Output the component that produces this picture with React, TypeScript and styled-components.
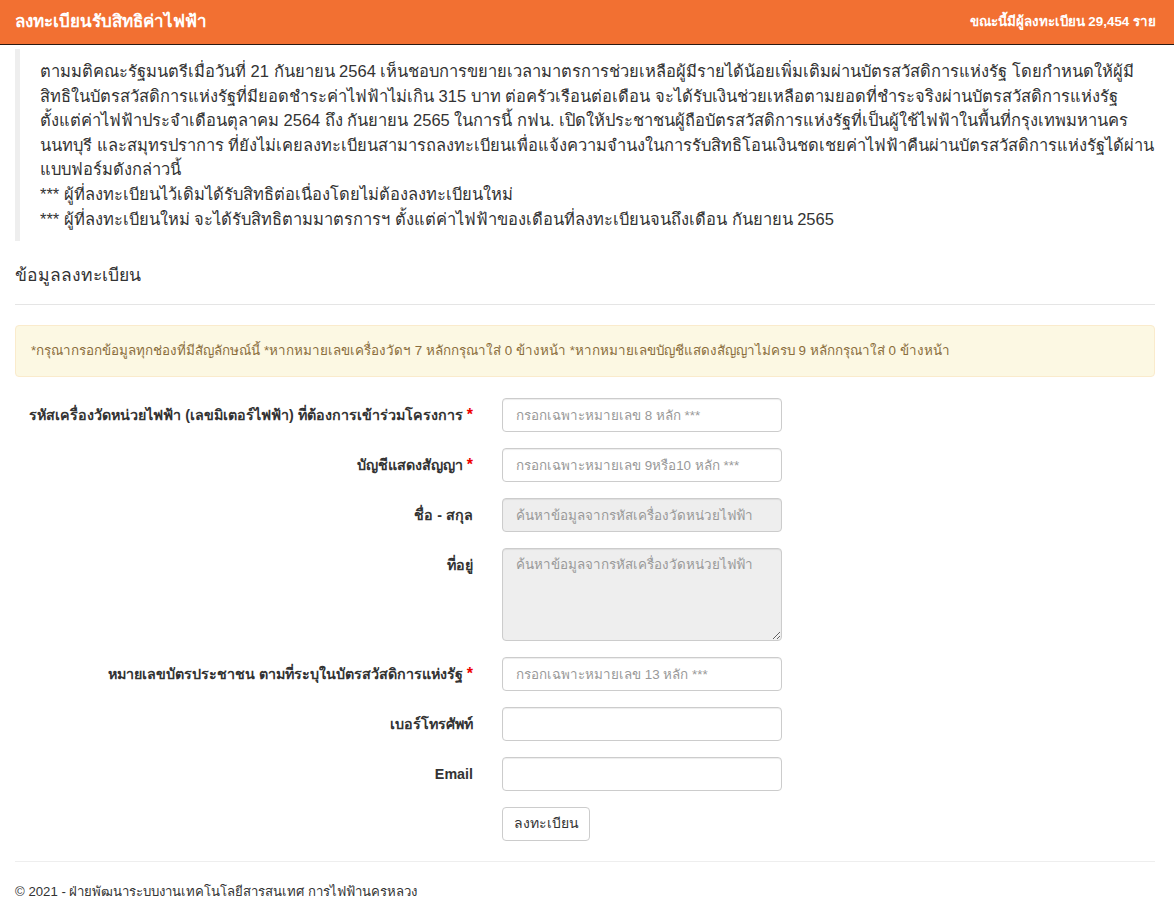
import React from 'react';
import styled, { createGlobalStyle } from 'styled-components';

const GlobalStyle = createGlobalStyle`
    * { box-sizing: border-box; }
    body {
        margin: 0;
        background: #fff;
        color: #333;
        font-family: 'Liberation Sans', Arial, 'Noto Sans', sans-serif;
        font-size: 14px;
        line-height: 1.42857;
    }
`;

// --- navbar ---
const NavBar = styled.header`
    display: flex;
    align-items: center;
    justify-content: space-between;
    height: 45px;
    padding: 0 18px 0 15px;
    background: #f27032;
    border-bottom: 1px solid #2b1a12;
    color: #fff;
`;

const Brand = styled.div`
    font-size: 17px;
    font-weight: bold;
`;

const Counter = styled.div`
    font-size: 13.4px;
    font-weight: bold;
`;

// --- page ---
const Page = styled.main`
    padding: 4px 19px 0 15px;
`;

const Notice = styled.blockquote`
    margin: 0 0 20px;
    padding: 10px 0 10px 20px;
    border-left: 5px solid #eee;
    font-size: 16.5px;
    line-height: 24.6px;
`;

const SectionTitle = styled.h4`
    margin: 24px 0 0;
    padding-bottom: 19px;
    border-bottom: 1px solid #e5e5e5;
    font-size: 17.5px;
    font-weight: normal;
    line-height: 20px;
`;

const Alert = styled.div`
    margin-top: 20px;
    padding: 15px 15px;
    background: #fcf8e3;
    border: 1px solid #faebcc;
    border-radius: 4px;
    color: #8a6d3b;
    font-size: 13.4px;
    line-height: 20px;
`;

// --- form ---
const Form = styled.form`
    display: grid;
    grid-template-columns: 458px 280px;
    column-gap: 29px;
    row-gap: 16px;
    margin-top: 21px;
    align-items: start;
`;

const Label = styled.label`
    padding-top: 7px;
    text-align: right;
    font-size: 14.3px;
    font-weight: bold;
    line-height: 20px;
`;

const Required = styled.span`
    color: #e00;
    margin-left: 4px;
    font-size: 16px;
`;

const Field = styled.input<{ $readOnly?: boolean }>`
    width: 280px;
    height: 34px;
    padding: 6px 13px;
    border: 1px solid #ccc;
    border-radius: 4px;
    background: ${p => (p.$readOnly ? '#eee' : '#fff')};
    box-shadow: inset 0 1px 1px rgba(0, 0, 0, 0.075);
    font: inherit;
    font-size: 13.4px;
    color: #555;
    &::placeholder { color: #999; }
`;

const Area = styled.textarea`
    width: 280px;
    height: 93px;
    padding: 6px 13px;
    border: 1px solid #ccc;
    border-radius: 4px;
    background: #eee;
    box-shadow: inset 0 1px 1px rgba(0, 0, 0, 0.075);
    font: inherit;
    font-size: 13.4px;
    color: #555;
    resize: vertical;
    &::placeholder { color: #999; }
`;

const SubmitButton = styled.button`
    grid-column: 2;
    justify-self: start;
    width: 88px;
    height: 34px;
    padding: 6px 10px;
    border: 1px solid #ccc;
    border-radius: 4px;
    background: #fff;
    color: #333;
    font: inherit;
    font-size: 14px;
    cursor: pointer;
`;

const Footer = styled.footer`
    margin-top: 20px;
    padding-top: 20px;
    border-top: 1px solid #eee;
    font-size: 13.2px;
    line-height: 20px;
`;

type Row = {
    label: string;
    required?: boolean;
    placeholder?: string;
    readOnly?: boolean;
    multiline?: boolean;
};

const rows: Row[] = [
    { label: 'รหัสเครื่องวัดหน่วยไฟฟ้า (เลขมิเตอร์ไฟฟ้า) ที่ต้องการเข้าร่วมโครงการ', required: true, placeholder: 'กรอกเฉพาะหมายเลข 8 หลัก ***' },
    { label: 'บัญชีแสดงสัญญา', required: true, placeholder: 'กรอกเฉพาะหมายเลข 9หรือ10 หลัก ***' },
    { label: 'ชื่อ - สกุล', placeholder: 'ค้นหาข้อมูลจากรหัสเครื่องวัดหน่วยไฟฟ้า', readOnly: true },
    { label: 'ที่อยู่', placeholder: 'ค้นหาข้อมูลจากรหัสเครื่องวัดหน่วยไฟฟ้า', readOnly: true, multiline: true },
    { label: 'หมายเลขบัตรประชาชน ตามที่ระบุในบัตรสวัสดิการแห่งรัฐ', required: true, placeholder: 'กรอกเฉพาะหมายเลข 13 หลัก ***' },
    { label: 'เบอร์โทรศัพท์' },
    { label: 'Email' },
];

export default function App() {
    return (
        <>
            <GlobalStyle />
            <NavBar>
                <Brand>ลงทะเบียนรับสิทธิค่าไฟฟ้า</Brand>
                <Counter>ขณะนี้มีผู้ลงทะเบียน 29,454 ราย</Counter>
            </NavBar>
            <Page>
                <Notice>
                    ตามมติคณะรัฐมนตรีเมื่อวันที่ 21 กันยายน 2564 เห็นชอบการขยายเวลามาตรการช่วยเหลือผู้มีรายได้น้อยเพิ่มเติมผ่านบัตรสวัสดิการแห่งรัฐ โดยกำหนดให้ผู้มีสิทธิในบัตรสวัสดิการแห่งรัฐที่มียอดชำระค่าไฟฟ้าไม่เกิน 315 บาท ต่อครัวเรือนต่อเดือน จะได้รับเงินช่วยเหลือตามยอดที่ชำระจริงผ่านบัตรสวัสดิการแห่งรัฐ ตั้งแต่ค่าไฟฟ้าประจำเดือนตุลาคม 2564 ถึง กันยายน 2565 ในการนี้ กฟน. เปิดให้ประชาชนผู้ถือบัตรสวัสดิการแห่งรัฐที่เป็นผู้ใช้ไฟฟ้าในพื้นที่กรุงเทพมหานคร นนทบุรี และสมุทรปราการ ที่ยังไม่เคยลงทะเบียนสามารถลงทะเบียนเพื่อแจ้งความจำนงในการรับสิทธิโอนเงินชดเชยค่าไฟฟ้าคืนผ่านบัตรสวัสดิการแห่งรัฐได้ผ่านแบบฟอร์มดังกล่าวนี้
                    <br />
                    *** ผู้ที่ลงทะเบียนไว้เดิมได้รับสิทธิต่อเนื่องโดยไม่ต้องลงทะเบียนใหม่
                    <br />
                    *** ผู้ที่ลงทะเบียนใหม่ จะได้รับสิทธิตามมาตรการฯ ตั้งแต่ค่าไฟฟ้าของเดือนที่ลงทะเบียนจนถึงเดือน กันยายน 2565
                </Notice>

                <SectionTitle>ข้อมูลลงทะเบียน</SectionTitle>

                <Alert>
                    *กรุณากรอกข้อมูลทุกช่องที่มีสัญลักษณ์นี้ *หากหมายเลขเครื่องวัดฯ 7 หลักกรุณาใส่ 0 ข้างหน้า *หากหมายเลขบัญชีแสดงสัญญาไม่ครบ 9 หลักกรุณาใส่ 0 ข้างหน้า
                </Alert>

                <Form onSubmit={e => e.preventDefault()}>
                    {rows.map(row => (
                        <React.Fragment key={row.label}>
                            <Label>
                                {row.label}
                                {row.required && <Required>*</Required>}
                            </Label>
                            {row.multiline ? (
                                <Area placeholder={row.placeholder} readOnly />
                            ) : (
                                <Field placeholder={row.placeholder} readOnly={row.readOnly} $readOnly={row.readOnly} />
                            )}
                        </React.Fragment>
                    ))}
                    <SubmitButton type="submit">ลงทะเบียน</SubmitButton>
                </Form>

                <Footer>© 2021 - ฝ่ายพัฒนาระบบงานเทคโนโลยีสารสนเทศ การไฟฟ้านครหลวง</Footer>
            </Page>
        </>
    );
}
